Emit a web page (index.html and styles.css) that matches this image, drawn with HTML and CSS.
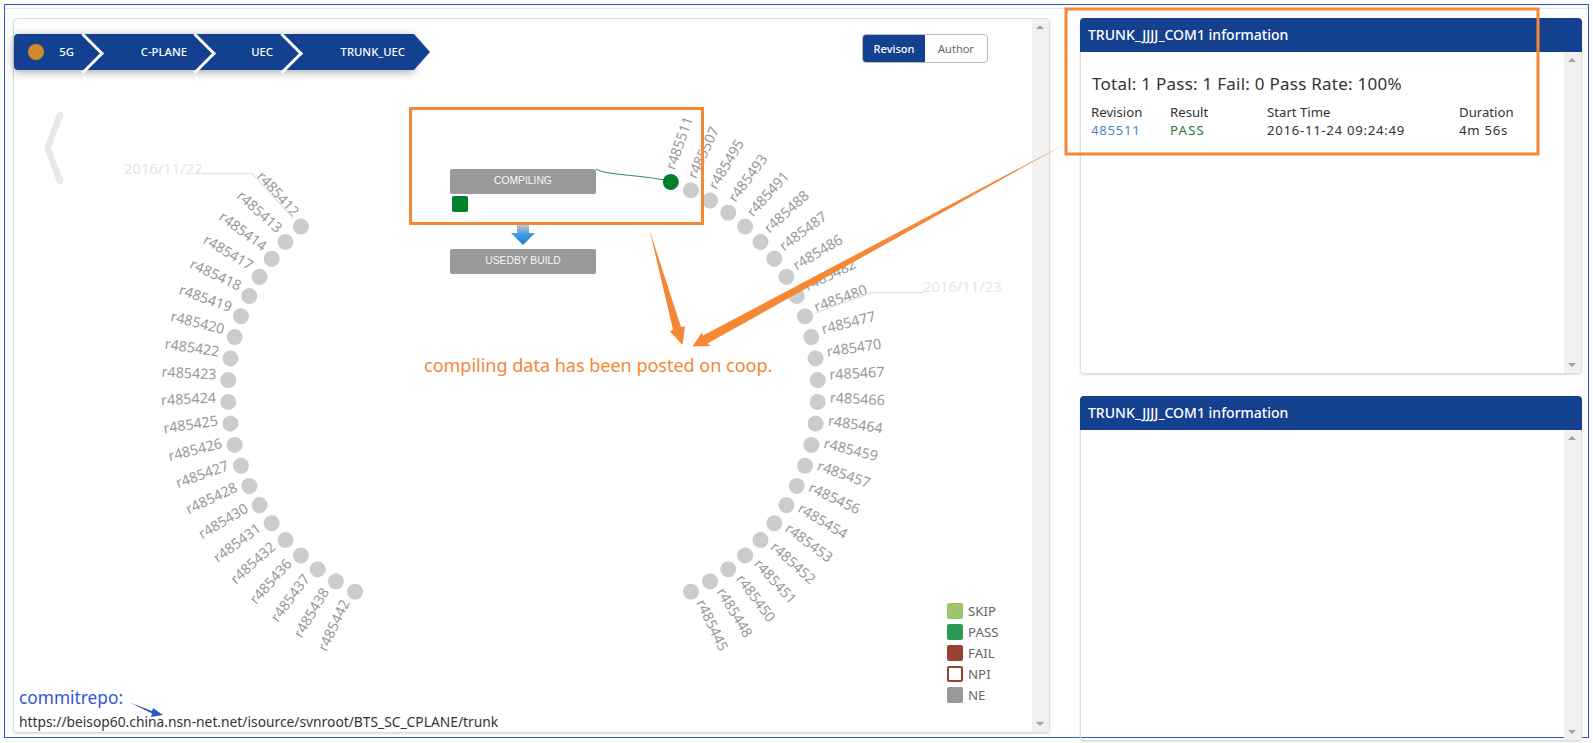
FILE: index.html

```html
<!DOCTYPE html>
<html lang="en">
<head>
    <meta charset="UTF-8">
    <title>Build information</title>
    <link rel="stylesheet" href="styles.css">
</head>
<body>
    <div class="frame">
        <div class="main-panel">
            <div class="main-body">
                <div class="top-row">
                    <div class="crumbs">
                        <span class="crumb crumb-first"><i class="status-dot"></i>5G</span>
                        <span class="crumb crumb-cplane">C-PLANE</span>
                        <span class="crumb crumb-uec">UEC</span>
                        <span class="crumb crumb-trunk">TRUNK_UEC</span>
                    </div>
                    <div class="toggle">
                        <span class="toggle-on">Revison</span>
                        <span class="toggle-off">Author</span>
                    </div>
                </div>
                <div class="legend">
                    <div class="legend-row"><i class="sw sw-skip"></i>SKIP</div>
                    <div class="legend-row"><i class="sw sw-pass"></i>PASS</div>
                    <div class="legend-row"><i class="sw sw-fail"></i>FAIL</div>
                    <div class="legend-row"><i class="sw sw-npi"></i>NPI</div>
                    <div class="legend-row"><i class="sw sw-ne"></i>NE</div>
                </div>
                <div class="repo">
                    <div class="repo-note">commitrepo:</div>
                    <div class="repo-url">https://beisop60.china.nsn-net.net/isource/svnroot/BTS_SC_CPLANE/trunk</div>
                </div>
            </div>
            <div class="scrollbar"><i class="arrow-up"></i><i class="arrow-down"></i></div>
        </div>
        <div class="side">
            <div class="info-panel info-top">
                <div class="info-head">TRUNK_JJJJ_COM1 information</div>
                <div class="info-body">
                    <div class="info-content">
                        <div class="summary">Total: 1 Pass: 1 Fail: 0 Pass Rate: 100%</div>
                        <div class="runs">
                            <span>Revision</span><span>Result</span><span>Start Time</span><span>Duration</span>
                            <span class="num rev">485511</span><span class="num pass">PASS</span><span class="num">2016-11-24 09:24:49</span><span class="num">4m 56s</span>
                        </div>
                    </div>
                    <div class="scrollbar"><i class="arrow-up"></i><i class="arrow-down"></i></div>
                </div>
            </div>
            <div class="info-panel info-bottom">
                <div class="info-head">TRUNK_JJJJ_COM1 information</div>
                <div class="info-body">
                    <div class="info-content"></div>
                    <div class="scrollbar"><i class="arrow-up"></i><i class="arrow-down"></i></div>
                </div>
            </div>
        </div>
    </div>

    <svg class="canvas" width="1593" height="743" id="canvas">
        <defs>
            <linearGradient id="flow" x1="0" y1="0" x2="0" y2="1">
                <stop offset="0" stop-color="#b9c6d4"/>
                <stop offset="0.5" stop-color="#3f97e0"/>
                <stop offset="1" stop-color="#1f7fd0"/>
            </linearGradient>
        </defs>
        <path class="top-line" d="M5 8.500 H1587"/>
        <path class="back" d="M60 115 L47.500 148 L60 181"/>
        <g id="wheel"></g>
        <text class="date" x="124" y="174">2016/11/22</text>
        <path class="date-line" d="M202 173.500 H252 L293 218"/>
        <text class="date" x="923" y="292">2016/11/23</text>
        <path class="date-line" d="M923 292.500 H871.500 L815 313"/>

        <rect class="job" x="450" y="169" width="146" height="25" rx="2"/>
        <text class="job-text" x="523" y="184">COMPILING</text>
        <rect class="job-pass" x="452" y="196" width="16" height="16" rx="2"/>
        <path d="M517 225 H529 V233 H535 L523 245 L511 233 H517 Z" fill="url(#flow)"/>
        <rect class="job" x="450" y="249" width="146" height="25" rx="2"/>
        <text class="job-text" x="523" y="264">USEDBY BUILD</text>
        <path class="link" d="M596 169 C605 175 640 175 664 180"/>

        <rect class="mark" x="410.500" y="108.500" width="292" height="115"/>
        <rect class="mark" x="1066" y="9" width="472" height="145"/>
        <path class="mark-fill" d="M649.500 230 L681 327 L685 326.500 L682.500 345 L670 331.500 L673 329.500 Z"/>
        <path class="mark-fill" d="M1065 144 L707.500 343.500 L711 346 L692.500 346.500 L701.700 332.700 L703 335.500 Z"/>
        <text class="note" x="424" y="372">compiling data has been posted on coop.</text>

        <path class="repo-arrow" d="M130 702.500 L152 711 L153 708 L163 715 L151 717 L152 713.500 Z"/>
    </svg>

    <script>
        const step = 5.625;
        const leftSide = [
            ["r485423", "r485422", "r485420", "r485419", "r485418", "r485417", "r485414", "r485413", "r485412"],
            ["r485424", "r485425", "r485426", "r485427", "r485428", "r485430", "r485431", "r485432", "r485436", "r485437", "r485438", "r485442"]
        ];
        const rightSide = [
            ["r485467", "r485470", "r485477", "r485480", "r485482", "r485486", "r485487", "r485488", "r485491", "r485493", "r485495", "r485507", "r485511"],
            ["r485466", "r485464", "r485459", "r485457", "r485456", "r485454", "r485453", "r485452", "r485451", "r485450", "r485448", "r485445"]
        ];

        function drawArc(names, cx, sign, up) {
            let html = "";
            for (let i = 0; i < names.length; i++) {
                let a = (step / 2 + step * i) * (up ? 1 : -1) * (sign < 0 ? 1 : -1);
                let x = cx + sign * 222;
                let cls = names[i] === "r485511" ? "dot dot-pass" : "dot";
                html += '<g transform="rotate(' + a + ' ' + cx + ' 391)">';
                html += '<circle class="' + cls + '" cx="' + x + '" cy="391" r="8"/>';
                html += '<text class="rev-label" x="' + (x + sign * 12) + '" y="391" text-anchor="' + (sign < 0 ? "end" : "start") + '">' + names[i] + '</text></g>';
            }
            return html;
        }

        document.getElementById("wheel").innerHTML =
            drawArc(leftSide[0], 450, -1, true) + drawArc(leftSide[1], 450, -1, false) +
            drawArc(rightSide[0], 596, 1, true) + drawArc(rightSide[1], 596, 1, false);
    </script>
</body>
</html>
```

FILE: styles.css

```css
* {
    box-sizing: border-box;
}
html, body {
    margin: 0;
    height: 743px;
    overflow: hidden;
    background: #fff;
}
body {
    font-family: "Noto Sans", sans-serif;
    color: #333;
    position: relative;
}
.frame {
    position: absolute;
    left: 4px;
    top: 4px;
    width: 1585px;
    height: 734px;
    border: 1px solid #3355cc;
    display: flex;
    gap: 30px;
    padding: 13px 4px 0 8px;
}
.main-panel {
    width: 1037px;
    height: 715px;
    border: 1px solid #ddd;
    border-radius: 4px;
    box-shadow: 0 1px 2px #ddd;
    display: flex;
}
.main-body {
    flex: 1;
    position: relative;
}
.top-row {
    display: flex;
    justify-content: space-between;
    padding: 15px 44px 0 0;
}
.crumbs {
    display: flex;
    height: 36px;
    width: 400px;
    color: #fff;
    font-size: 11.300px;
    font-weight: 500;
    line-height: 36px;
    background: #134190;
    border-radius: 4px 0 0 4px;
    box-shadow: 0 2px 10px rgba(0, 0, 0, .35);
    position: relative;
}
.crumbs::after {
    content: "";
    position: absolute;
    right: -16px;
    top: 0;
    border-left: 16px solid #134190;
    border-top: 18px solid transparent;
    border-bottom: 18px solid transparent;
}
.crumb {
    position: relative;
    display: block;
    text-align: right;
    flex: none;
}
.crumb-first {
    width: 77px;
    padding-right: 17px;
}
.crumb-cplane {
    width: 112px;
    padding-right: 16px;
}
.crumb-uec {
    width: 87px;
    padding-right: 17px;
}
.crumb-trunk {
    width: 124px;
    padding-right: 9px;
}
.crumb:not(.crumb-trunk)::after {
    content: "";
    position: absolute;
    right: -7px;
    top: 5px;
    width: 26px;
    height: 26px;
    border-top: 3px solid #fff;
    border-right: 3px solid #fff;
    transform: rotate(45deg);
}
.status-dot {
    position: absolute;
    left: 14px;
    top: 10px;
    width: 16px;
    height: 16px;
    border-radius: 50%;
    background: #cf8a2e;
}
.toggle {
    display: flex;
    height: 29px;
    line-height: 27px;
    font-size: 11px;
    border: 1px solid #bbb;
    border-radius: 4px;
    overflow: hidden;
    color: #666;
}
.toggle-on {
    width: 62px;
    text-align: center;
    background: #134190;
    color: #fff;
    font-weight: 500;
}
.toggle-off {
    width: 62px;
    text-align: center;
}
.legend {
    position: absolute;
    left: 933px;
    top: 584px;
    font-size: 13.300px;
    color: #666;
}
.legend-row {
    display: flex;
    align-items: center;
    height: 16px;
    margin-bottom: 5px;
    gap: 5px;
}
.sw {
    width: 16px;
    height: 16px;
    border-radius: 2px;
}
.sw-skip { background: #9bc567; }
.sw-pass { background: #2e9a55; }
.sw-fail { background: #974232; }
.sw-npi { border: 2px solid #974232; }
.sw-ne { background: #999; }
.repo {
    position: absolute;
    left: 5px;
    bottom: 0;
}
.repo-note {
    font-size: 17.300px;
    color: #3355dd;
    line-height: 22px;
    margin-bottom: 3px;
}
.repo-url {
    font-size: 13.800px;
    line-height: 20px;
    color: #333;
}
.scrollbar {
    position: relative;
    width: 17px;
    background: #f1f1f1;
    flex: none;
}
.arrow-up, .arrow-down {
    position: absolute;
    left: 4px;
    border-left: 4px solid transparent;
    border-right: 4px solid transparent;
}
.arrow-up {
    top: 6px;
    border-bottom: 4px solid #a3a3a3;
}
.arrow-down {
    bottom: 6px;
    border-top: 4px solid #a3a3a3;
}
.side {
    width: 502px;
    display: flex;
    flex-direction: column;
    gap: 22px;
}
.info-panel {
    border: 1px solid #ddd;
    border-radius: 4px;
    display: flex;
    flex-direction: column;
    box-shadow: 0 1px 2px #ddd;
    flex: none;
}
.info-top {
    height: 356px;
}
.info-bottom {
    height: 345px;
}
.info-head {
    height: 34px;
    margin: -1px -1px 0;
    background: #134190;
    border-radius: 4px 4px 0 0;
    color: #fff;
    font-size: 14px;
    font-weight: 500;
    line-height: 34px;
    padding-left: 8px;
}
.info-body {
    flex: 1;
    display: flex;
}
.info-content {
    flex: 1;
    padding: 21px 10px 0 11px;
}
.summary {
    font-size: 17px;
    letter-spacing: .25px;
    line-height: 22px;
}
.runs {
    display: grid;
    grid-template-columns: 79px 97px 192px 1fr;
    margin-top: 8px;
    margin-left: -1px;
    font-size: 13.200px;
    line-height: 18px;
}
.num {
    letter-spacing: .7px;
}
.rev {
    color: #4a86c8;
}
.pass {
    color: #1e7d3c;
    letter-spacing: 1.200px;
}
.canvas {
    position: absolute;
    left: 0;
    top: 0;
    pointer-events: none;
}
.top-line {
    fill: none;
    stroke: #dfe6f5;
}
.back {
    fill: none;
    stroke: #e8e8e8;
    stroke-width: 6.500;
    stroke-linecap: round;
    stroke-linejoin: round;
}
.dot {
    fill: #ccc;
}
.dot-pass {
    fill: #007f2d;
}
.rev-label {
    font-size: 14.300px;
    fill: #999;
}
.date {
    font-size: 14.800px;
    fill: #e5e5e5;
}
.date-line {
    fill: none;
    stroke: #e5e5e5;
    stroke-width: 1.500;
}
.job {
    fill: #999;
}
.job-text {
    font-family: "Liberation Sans", sans-serif;
    font-size: 10.300px;
    fill: #f7f7f7;
    text-anchor: middle;
}
.job-pass {
    fill: #007f2d;
}
.link {
    fill: none;
    stroke: #2e8b57;
}
.mark {
    fill: none;
    stroke: #f58735;
    stroke-width: 3;
}
.mark-fill {
    fill: #f58735;
}
.note {
    font-size: 18px;
    fill: #f58735;
}
.repo-arrow {
    fill: #3355cc;
}
```
